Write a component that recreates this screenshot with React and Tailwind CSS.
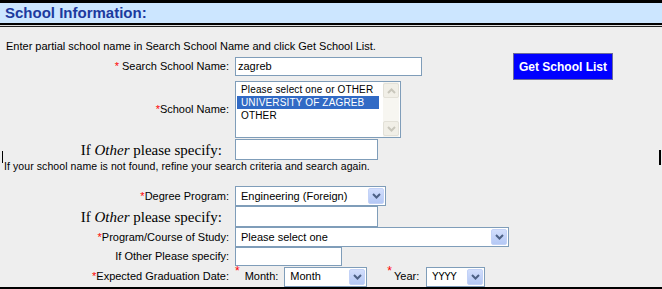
import React from "react";

function Chevron({ color = "#4d6185", up = false }) {
  return (
    <svg width="9" height="6" viewBox="0 0 9 6" className="block">
      <path
        d={up ? "M1 5 L4.5 1.5 L8 5" : "M1 1 L4.5 4.5 L8 1"}
        fill="none"
        stroke={color}
        strokeWidth="2"
      />
    </svg>
  );
}

function Select({ width, text, height = "h-[20px]", textClass = "" }) {
  return (
    <div
      className={`${width} ${height} border border-[#7f9db9] bg-white flex items-center text-[11px]`}
    >
      <span className={`flex-1 pl-[5px] whitespace-nowrap overflow-hidden ${textClass}`}>{text}</span>
      <div className="w-[16px] h-[16px] mr-[1px] rounded-[2px] bg-gradient-to-b from-[#d2defc] to-[#b4c8f5] border border-[#c3d2f7] flex items-center justify-center">
        <Chevron />
      </div>
    </div>
  );
}

function Input({ width, height = "h-[20px]", value = "" }) {
  return (
    <div
      className={`${width} ${height} border border-[#7f9db9] bg-white flex items-center pl-[2px] text-[11px]`}
    >
      {value}
    </div>
  );
}

function Label({ children, serif = false }) {
  return (
    <div
      className={`w-[230px] shrink-0 text-right whitespace-nowrap ${
        serif
          ? "font-['Liberation_Serif',serif] text-[15px] pr-[8px] leading-[18px]"
          : "text-[11px] pr-[1px]"
      }`}
    >
      {children}
    </div>
  );
}

const Star = () => <span className="text-[#ff0000]">*</span>;

function OtherLabel() {
  return (
    <Label serif>
      If <i>Other</i> please specify:
    </Label>
  );
}

export default function App() {
  return (
    <div className="w-[662px] h-[289px] bg-[#eeeeee] relative overflow-hidden font-['Liberation_Sans',Arial,sans-serif] text-black">
      <div className="h-[3px] bg-black" />
      <div className="h-[20px] bg-[#cce6ff] pl-[5px] text-[15px] font-bold text-[#1c3a9e] leading-[20px]">
        School Information:
      </div>
      <div className="h-[2px] bg-black" />
      <div className="h-[1px] bg-[#dcdcdc]" />
      <div className="h-[1px] bg-[#222]" />

      <p className="mt-[13px] ml-[6px] text-[11px] leading-[13px] whitespace-nowrap">
        Enter partial school name in Search School Name and click Get School List.
      </p>

      {/* Search row */}
      <div className="h-[27px] flex items-center">
        <Label>
          <Star /> Search School Name:
        </Label>
        <div className="ml-[5px]">
          <Input width="w-[187px]" height="h-[19px]" value="zagreb" />
        </div>
        <button className="ml-[91px] w-[100px] h-[27px] bg-[#0000ff] border border-[#6b6b9b] text-white font-bold text-[12px]">
          Get School List
        </button>
      </div>

      {/* School name listbox */}
      <div className="h-[59px] flex items-center">
        <Label>
          <Star />
          School Name:
        </Label>
        <div className="ml-[5px] w-[166px] h-[57px] border border-[#7f9db9] bg-white flex text-[10px] tracking-[0.15px] leading-[13px]">
          <div className="flex-1 pt-[1px] pl-[1px] pr-[4px]">
            <div className="pl-[4px] whitespace-nowrap">Please select one or OTHER</div>
            <div className="pl-[4px] bg-[#316ac5] text-white whitespace-nowrap">UNIVERSITY OF ZAGREB</div>
            <div className="pl-[4px]">OTHER</div>
          </div>
          <div className="w-[16px] bg-[#f7f6f1] flex flex-col justify-between py-[1px] mr-[1px]">
            <div className="h-[15px] rounded-[2px] bg-[#f1efe7] border border-[#e3e1d8] flex items-center justify-center">
              <Chevron color="#c9c7bc" up />
            </div>
            <div className="h-[15px] rounded-[2px] bg-[#f1efe7] border border-[#e3e1d8] flex items-center justify-center">
              <Chevron color="#c9c7bc" />
            </div>
          </div>
        </div>
      </div>

      {/* If other */}
      <div className="h-[21px] flex items-center">
        <OtherLabel />
        <div className="ml-[5px]">
          <Input width="w-[143px]" height="h-[21px]" />
        </div>
      </div>

      <p className="ml-[4px] text-[10.5px] tracking-[0.08px] leading-[13px] whitespace-nowrap">
        If your school name is not found, refine your search criteria and search again.
      </p>

      {/* Degree program */}
      <div className="mt-[13px] h-[20px] flex items-center">
        <Label>
          <Star />
          Degree Program:
        </Label>
        <div className="ml-[5px]">
          <Select width="w-[151px]" text="Engineering (Foreign)" />
        </div>
      </div>

      <div className="h-[21px] flex items-center">
        <OtherLabel />
        <div className="ml-[5px]">
          <Input width="w-[143px]" height="h-[21px]" />
        </div>
      </div>

      <div className="h-[20px] flex items-center">
        <Label>
          <Star />
          Program/Course of Study:
        </Label>
        <div className="ml-[5px]">
          <Select width="w-[274px]" text="Please select one" />
        </div>
      </div>

      <div className="h-[19px] flex items-center">
        <Label>If Other Please specify:</Label>
        <div className="ml-[5px]">
          <Input width="w-[107px]" height="h-[19px]" />
        </div>
      </div>

      <div className="h-[21px] flex items-center text-[11px]">
        <Label>
          <Star />
          Expected Graduation Date:
        </Label>
        <span className="ml-[5px] self-start text-[#ff0000] text-[12px] leading-[10px]">*</span>
        <span className="ml-[5px]">Month:</span>
        <div className="ml-[6px]">
          <Select width="w-[83px]" text="Month" />
        </div>
        <span className="ml-[20px] self-start text-[#ff0000] text-[12px] leading-[10px]">*</span>
        <span className="ml-[2px]">Year:</span>
        <div className="ml-[7px]">
          <Select width="w-[59px]" text="YYYY" textClass="font-['DejaVu_Sans',sans-serif] text-[10px] text-black" />
        </div>
      </div>

      <div className="h-[2px] bg-black" />

      <div className="absolute left-[2px] top-[151px] w-[1px] h-[12px] bg-black" />
      <div className="absolute left-[659px] top-[150px] w-[2px] h-[15px] bg-black" />
    </div>
  );
}
